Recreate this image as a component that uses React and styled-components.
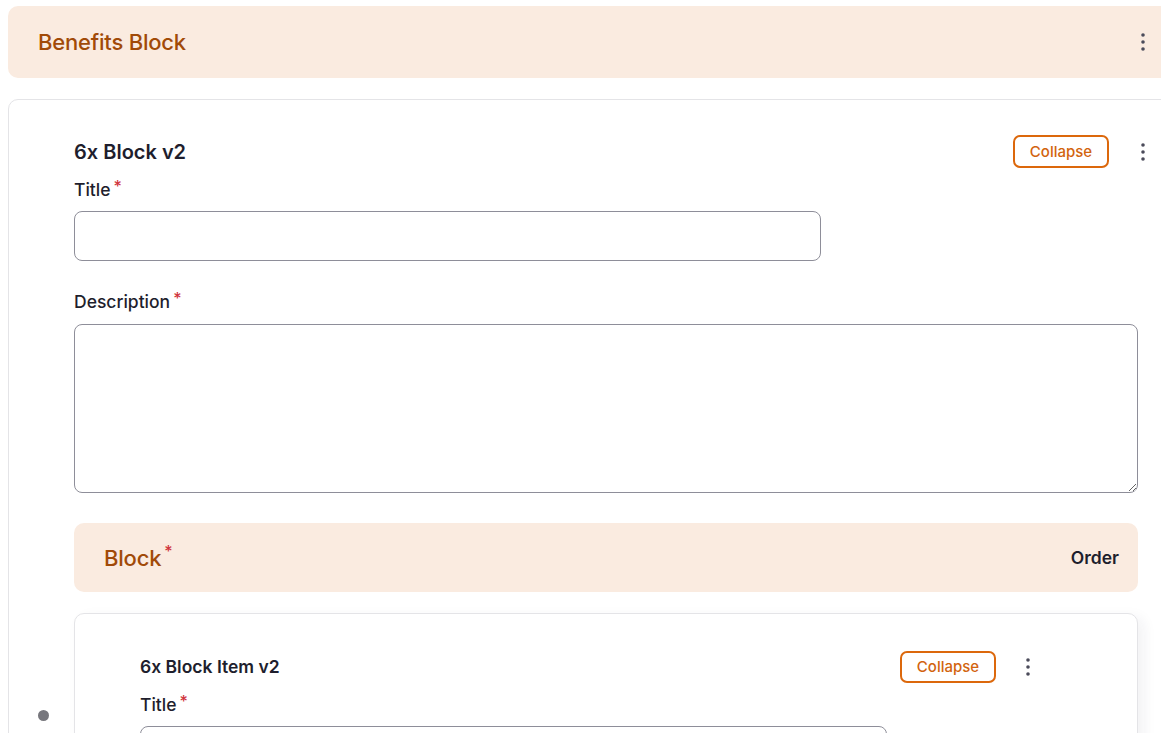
import React from 'react'
import styled, { createGlobalStyle } from 'styled-components'

const GlobalStyle = createGlobalStyle`
body {
  margin: 0;
  overflow: hidden;
  background: #fff;
  font-family: Inter, "Liberation Sans", sans-serif;
  color: #1e1e2d;
}
`

const Page = styled.div`
width: 1170px;
padding: 6px 0 0 8px;
display: flex;
flex-direction: column;
gap: 21px;
`

const Banner = styled.div`
display: flex;
align-items: center;
justify-content: space-between;
background: #faebe0;
border-radius: 10px;
height: ${props => props.tall ? '72px' : '69px'};
padding: ${props => props.tall ? '0 28px 0 30px' : '0 19px 0 30px'};
box-sizing: border-box;
`

const BannerTitle = styled.h2`
margin: 0;
font-size: 22px;
font-weight: 500;
color: #a14a08;
letter-spacing: -0.2px;
`

const Order = styled.span`
font-size: 17.5px;
font-weight: 600;
color: #1e1e2d;
`

const Card = styled.div`
position: relative;
border: 1px solid #e4e4e7;
border-radius: 10px;
background: #fff;
padding: ${props => props.inner ? '36px 115px 0 65px' : '35px 0 40px 65px'};
box-shadow: ${props => props.inner ? '6px 4px 14px rgba(30, 30, 60, 0.06)' : 'none'};
`

const Header = styled.div`
display: flex;
align-items: center;
justify-content: space-between;
height: 33px;
margin-right: ${props => props.inner ? '-13px' : '-12px'};
`

const CardTitle = styled.h3`
margin: 0;
font-size: ${props => props.size || 20}px;
font-weight: 600;
color: #1e1e2d;
`

const Actions = styled.div`
display: flex;
align-items: center;
gap: ${props => props.inner ? '25px' : '27px'};
`

const CollapseButton = styled.button`
height: ${props => props.small ? '32px' : '33px'};
width: 96px;
border: 2px solid #dc680c;
border-radius: 7px;
background: #fff;
color: #d2640e;
font-family: Inter, "Liberation Sans", sans-serif;
font-size: 15px;
font-weight: 500;
cursor: pointer;
padding: 0;
`

const KebabButton = styled.button`
border: none;
background: transparent;
padding: 0;
width: 14px;
height: 24px;
display: flex;
align-items: center;
justify-content: center;
cursor: pointer;
`

const Content = styled.div`
width: ${props => props.inner ? 'auto' : '1064px'};
display: flex;
flex-direction: column;
`

const Label = styled.label`
display: block;
font-size: 17.5px;
font-weight: 500;
line-height: 22px;
color: #1e1e2d;
margin: ${props => props.first ? '11px' : '30px'} 0 ${props => props.first ? '10px' : '11px'};
`

const Required = styled.sup`
color: #d0343c;
font-size: 16px;
margin-left: 3px;
vertical-align: top;
position: relative;
top: -4px;
`

const Input = styled.input`
display: block;
width: 747px;
height: 50px;
box-sizing: border-box;
border: 1px solid #8e8e99;
border-radius: 8px;
font-family: inherit;
font-size: 16px;
padding: 0 14px;
`

const TextArea = styled.textarea`
display: block;
width: 100%;
height: 169px;
box-sizing: border-box;
border: 1px solid #8e8e99;
border-radius: 8px;
font-family: inherit;
font-size: 16px;
padding: 12px 14px;
resize: vertical;
`

const Section = styled.div`
margin-top: 30px;
display: flex;
flex-direction: column;
gap: 21px;
`

const DragDot = styled.span`
position: absolute;
left: -37px;
top: 96px;
width: 11px;
height: 11px;
border-radius: 50%;
background: #77777d;
`

const Kebab = () => (
  <KebabButton aria-label="More">
    <svg width="4" height="18" viewBox="0 0 4 18">
      <circle cx="2" cy="2" r="1.8" fill="#4b4b5a" />
      <circle cx="2" cy="9" r="1.8" fill="#4b4b5a" />
      <circle cx="2" cy="16" r="1.8" fill="#4b4b5a" />
    </svg>
  </KebabButton>
)

const App = () => {
  return (
    <>
      <GlobalStyle />
      <Page>
        <Banner tall>
          <BannerTitle>Benefits Block</BannerTitle>
          <Kebab />
        </Banner>
        <Card>
          <Content>
            <Header>
              <CardTitle>6x Block v2</CardTitle>
              <Actions>
                <CollapseButton>Collapse</CollapseButton>
                <Kebab />
              </Actions>
            </Header>
            <Label first>Title<Required>*</Required></Label>
            <Input />
            <Label>Description<Required>*</Required></Label>
            <TextArea />
            <Section>
              <Banner>
                <BannerTitle>Block<Required>*</Required></BannerTitle>
                <Order>Order</Order>
              </Banner>
              <Card inner>
                <DragDot />
                <Content inner>
                  <Header inner>
                    <CardTitle size={17.5}>6x Block Item v2</CardTitle>
                    <Actions inner>
                      <CollapseButton small>Collapse</CollapseButton>
                      <Kebab />
                    </Actions>
                  </Header>
                  <Label first>Title<Required>*</Required></Label>
                  <Input />
                  <Label>Description<Required>*</Required></Label>
                  <TextArea />
                </Content>
              </Card>
            </Section>
          </Content>
        </Card>
      </Page>
    </>
  )
}

export default App
